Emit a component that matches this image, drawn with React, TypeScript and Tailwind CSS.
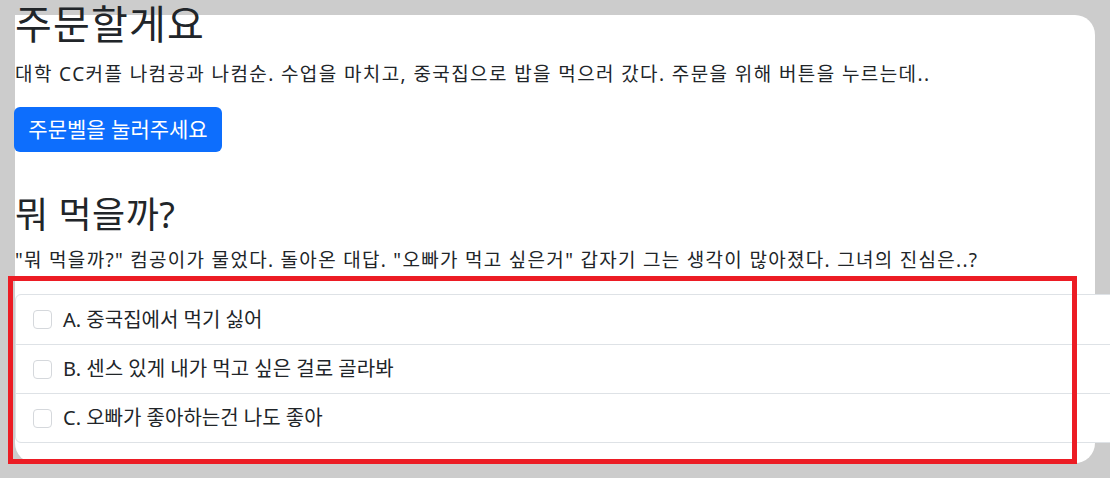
import React from "react";

const font = { fontFamily: '"Noto Sans", "Noto Sans CJK KR", sans-serif' };

function Check() {
  return (
    <span className="inline-block w-[19px] h-[19px] rounded-[4px] border border-[#d5d8dc] bg-white shrink-0" />
  );
}

export default function App() {
  const items = [
    "A. 중국집에서 먹기 싫어",
    "B. 센스 있게 내가 먹고 싶은 걸로 골라봐",
    "C. 오빠가 좋아하는건 나도 좋아",
  ];
  return (
    <div
      className="relative w-[1110px] h-[478px] bg-[#cccccc] overflow-hidden pt-[15px] pl-[15px] text-[#212529]"
      style={font}
    >
      <div className="flex flex-col items-start w-[1080px] h-[448px] bg-white rounded-[20px] rounded-tl-none">
        <h1 className="-mt-[15px] text-[40px] leading-[48px] tracking-[1.2px] font-normal whitespace-nowrap">
          주문할게요
        </h1>
        <p className="mt-[14px] text-[19px] leading-[24px] tracking-[1.4px] whitespace-nowrap">
          대학 CC커플 나컴공과 나컴순. 수업을 마치고, 중국집으로 밥을 먹으러 갔다. 주문을 위해 버튼을 누르는데..
        </p>
        <button className="mt-[21px] -ml-[1px] w-[208px] h-[45px] rounded-[6px] bg-[#0d6efd] text-white text-[21px] leading-[27px] whitespace-nowrap">
          주문벨을 눌러주세요
        </button>
        <h2 className="mt-[41px] text-[36px] leading-[43px] tracking-[0.5px] font-normal whitespace-nowrap">
          뭐 먹을까?
        </h2>
        <p className="mt-[12px] text-[19px] leading-[24px] tracking-[1.3px] whitespace-nowrap">
          "뭐 먹을까?" 컴공이가 물었다. 돌아온 대답. "오빠가 먹고 싶은거" 갑자기 그는 생각이 많아졌다. 그녀의 진심은..?
        </p>
        <ul className="mt-[22px] w-[1120px] border border-[#dee2e6] rounded-[6px] bg-white">
          {items.map((t, i) => (
            <li
              key={t}
              className={
                "flex items-center h-[49px] pl-[17px] gap-[11px] text-[20px] whitespace-nowrap " +
                (i > 0 ? "border-t border-[#dee2e6]" : "")
              }
            >
              <Check />
              <span>{t}</span>
            </li>
          ))}
        </ul>
      </div>
      <div className="absolute left-[8px] top-[276px] w-[1069px] h-[188px] border-[5px] border-[#ec1c24] pointer-events-none" />
    </div>
  );
}
